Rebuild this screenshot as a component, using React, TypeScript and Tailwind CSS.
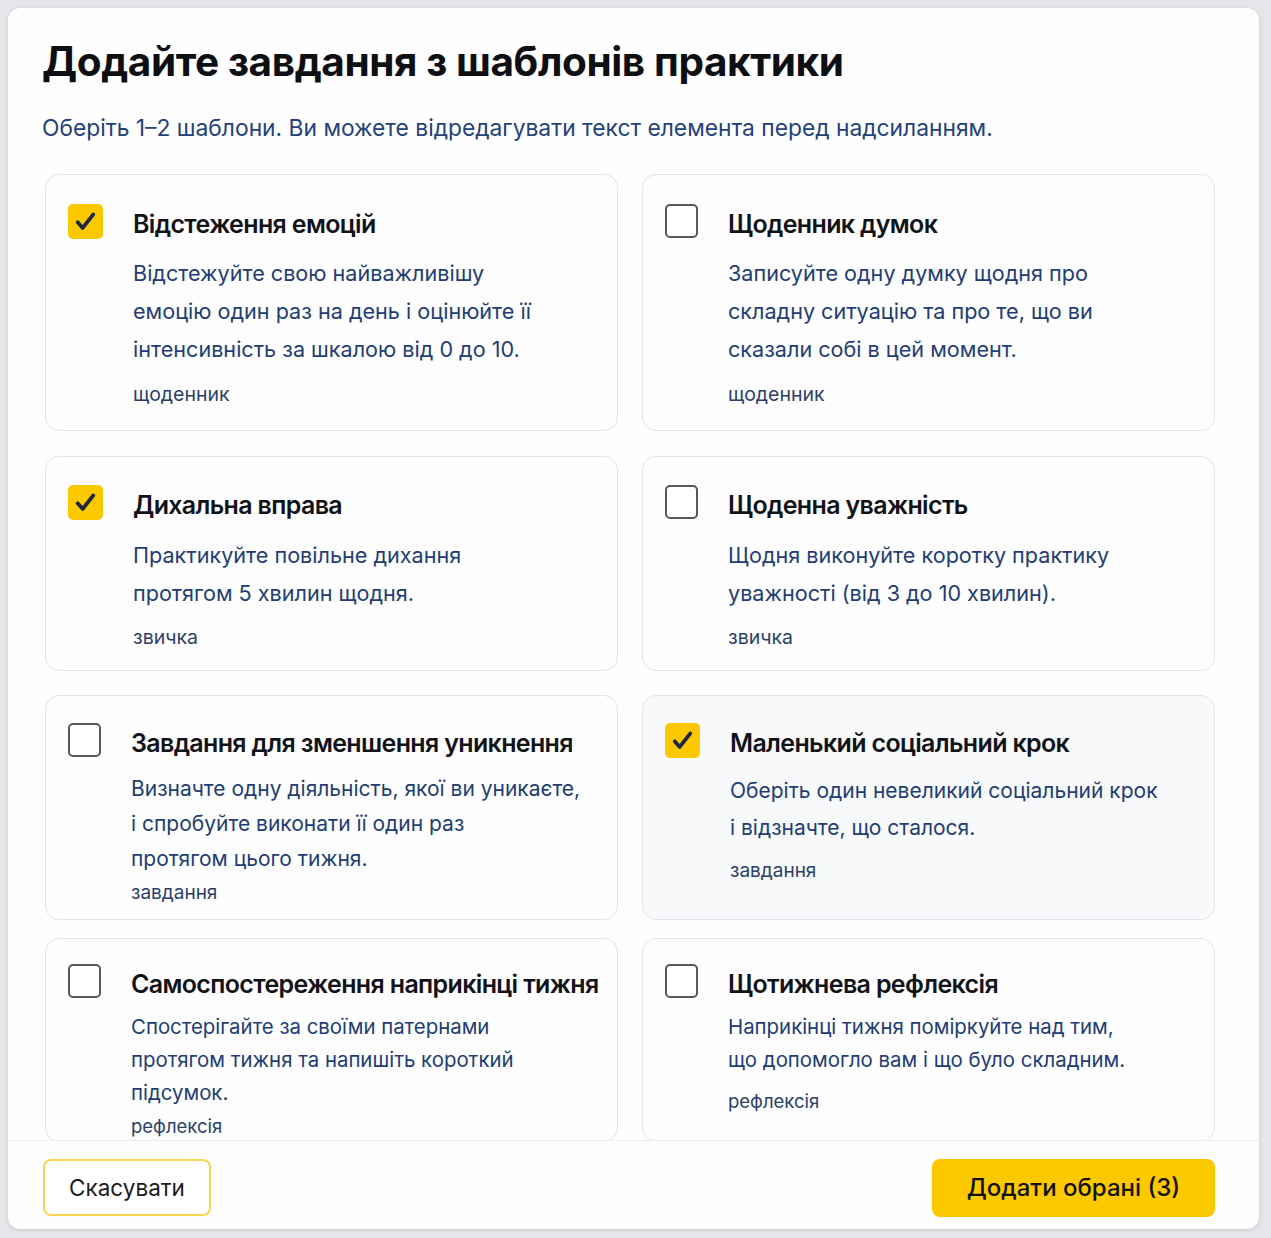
import React from "react";

type Card = {
  title: string;
  lines: string[];
  tag: string;
  checked: boolean;
  h: string;
  pt: string;
  descMt: string;
  lh: string;
  fs: string;
  tagFs: string;
  tagMt: string;
  bg: string;
};

const rows: Card[][] = [
  [
    {
      title: "Відстеження емоцій",
      lines: [
        "Відстежуйте свою найважливішу",
        "емоцію один раз на день і оцінюйте її",
        "інтенсивність за шкалою від 0 до 10.",
      ],
      tag: "щоденник",
      checked: true,
      h: "h-[257px]",
      pt: "pt-[31px]",
      descMt: "mt-[12px]",
      lh: "leading-[38px]",
      fs: "text-[21.6px]",
      tagFs: "text-[19.5px]",
      tagMt: "mt-[13px]",
      bg: "bg-[#fdfdfe]",
    },
    {
      title: "Щоденник думок",
      lines: [
        "Записуйте одну думку щодня про",
        "складну ситуацію та про те, що ви",
        "сказали собі в цей момент.",
      ],
      tag: "щоденник",
      checked: false,
      h: "h-[257px]",
      pt: "pt-[31px]",
      descMt: "mt-[12px]",
      lh: "leading-[38px]",
      fs: "text-[21.6px]",
      tagFs: "text-[19.5px]",
      tagMt: "mt-[13px]",
      bg: "bg-[#fdfdfe]",
    },
  ],
  [
    {
      title: "Дихальна вправа",
      lines: ["Практикуйте повільне дихання", "протягом 5 хвилин щодня."],
      tag: "звичка",
      checked: true,
      h: "h-[215px]",
      pt: "pt-[30px]",
      descMt: "mt-[13px]",
      lh: "leading-[38px]",
      fs: "text-[21.6px]",
      tagFs: "text-[19.5px]",
      tagMt: "mt-[12px]",
      bg: "bg-[#fdfdfe]",
    },
    {
      title: "Щоденна уважність",
      lines: [
        "Щодня виконуйте коротку практику",
        "уважності (від 3 до 10 хвилин).",
      ],
      tag: "звичка",
      checked: false,
      h: "h-[215px]",
      pt: "pt-[30px]",
      descMt: "mt-[13px]",
      lh: "leading-[38px]",
      fs: "text-[21.6px]",
      tagFs: "text-[19.5px]",
      tagMt: "mt-[12px]",
      bg: "bg-[#fdfdfe]",
    },
  ],
  [
    {
      title: "Завдання для зменшення уникнення",
      lines: [
        "Визначте одну діяльність, якої ви уникаєте,",
        "і спробуйте виконати її один раз",
        "протягом цього тижня.",
      ],
      tag: "завдання",
      checked: false,
      h: "h-[225px]",
      pt: "pt-[29px]",
      descMt: "mt-[10px]",
      lh: "leading-[35px]",
      fs: "text-[21px]",
      tagFs: "text-[19px]",
      tagMt: "mt-[4px]",
      bg: "bg-[#fdfdfe]",
    },
    {
      title: "Маленький соціальний крок",
      lines: ["Оберіть один невеликий соціальний крок", "і відзначте, що сталося."],
      tag: "завдання",
      checked: true,
      h: "h-[225px]",
      pt: "pt-[29px]",
      descMt: "mt-[11px]",
      lh: "leading-[37px]",
      fs: "text-[21px]",
      tagFs: "text-[19px]",
      tagMt: "mt-[12px]",
      bg: "bg-[#f8f9fb]",
    },
  ],
  [
    {
      title: "Самоспостереження наприкінці тижня",
      lines: [
        "Спостерігайте за своїми патернами",
        "протягом тижня та напишіть короткий",
        "підсумок.",
      ],
      tag: "рефлексія",
      checked: false,
      h: "h-[204px]",
      pt: "pt-[27px]",
      descMt: "mt-[8px]",
      lh: "leading-[33px]",
      fs: "text-[20.4px]",
      tagFs: "text-[18.5px]",
      tagMt: "mt-[4px]",
      bg: "bg-[#fdfdfe]",
    },
    {
      title: "Щотижнева рефлексія",
      lines: [
        "Наприкінці тижня поміркуйте над тим,",
        "що допомогло вам і що було складним.",
      ],
      tag: "рефлексія",
      checked: false,
      h: "h-[204px]",
      pt: "pt-[27px]",
      descMt: "mt-[8px]",
      lh: "leading-[33px]",
      fs: "text-[20.4px]",
      tagFs: "text-[18.5px]",
      tagMt: "mt-[12px]",
      bg: "bg-[#fdfdfe]",
    },
  ],
];

const rowMt = ["mt-[32px]", "mt-[25px]", "mt-[24px]", "mt-[18px]"];

function Checkbox({ checked }: { checked: boolean }) {
  if (checked) {
    return (
      <div className="mt-[-2px] flex h-[35px] w-[35px] shrink-0 items-center justify-center rounded-[5px] bg-[#fcc800]">
        <svg width="25" height="25" viewBox="0 0 24 24" fill="none">
          <path
            d="M4.5 12.8l4.8 5.4L19.5 5.2"
            stroke="#1d2840"
            strokeWidth="3.6"
            strokeLinecap="round"
            strokeLinejoin="round"
          />
        </svg>
      </div>
    );
  }
  return (
    <div className="mt-[-2px] h-[34px] w-[33px] shrink-0 rounded-[5px] border-2 border-[#54585f] bg-white" />
  );
}

function CardView({ c }: { c: Card }) {
  return (
    <div
      className={`${c.h} ${c.bg} flex rounded-[14px] border-[1.5px] border-[#e2e5ed] pl-[22px] pr-[20px] ${c.pt}`}
    >
      <Checkbox checked={c.checked} />
      <div className="ml-[30px] flex min-w-0 flex-col">
        <div className="whitespace-nowrap text-[25px] font-semibold leading-[36px] tracking-[-0.65px] text-[#111318]">
          {c.title}
        </div>
        <div
          className={`${c.descMt} ${c.lh} ${c.fs} whitespace-nowrap text-[#223d75]`}
        >
          {c.lines.map((l, i) => (
            <div key={i}>{l}</div>
          ))}
        </div>
        <div className={`${c.tagMt} ${c.tagFs} leading-[26px] text-[#2b3f6b]`}>
          {c.tag}
        </div>
      </div>
    </div>
  );
}

export default function App() {
  return (
    <div
      className="min-h-screen bg-[#e5e6e9] p-[8px]"
      style={{ fontFamily: "Inter, 'Noto Sans', sans-serif" }}
    >
      <div className="flex h-[1221px] w-[1251px] flex-col overflow-hidden rounded-[12px] bg-[#fefefe] shadow-[0_1px_4px_rgba(0,0,0,0.12)]">
        <div className="flex-1 overflow-hidden">
          <div className="pl-[34px] pt-[30px]">
            <h1 className="whitespace-nowrap text-[40.5px] font-bold leading-[48px] tracking-[-0.4px] text-[#0e0f12]">
              Додайте завдання з шаблонів практики
            </h1>
            <p className="mt-[28px] whitespace-nowrap text-[22.8px] leading-[28px] text-[#24417c]">
              Оберіть 1–2 шаблони. Ви можете відредагувати текст елемента перед надсиланням.
            </p>
          </div>
          <div className="pl-[37px] pr-[44px]">
            {rows.map((r, i) => (
              <div key={i} className={`${rowMt[i]} grid grid-cols-2 gap-x-[24px]`}>
                {r.map((c, j) => (
                  <CardView key={j} c={c} />
                ))}
              </div>
            ))}
          </div>
        </div>
        <div className="flex items-start justify-between border-t border-[#eceef2] pb-[12px] pl-[35px] pr-[44px] pt-[18px]">
          <button className="flex h-[57px] w-[168px] items-center justify-center rounded-[8px] border-2 border-[#f8d64e] bg-white text-[22.5px] text-[#1b1c20]">
            Скасувати
          </button>
          <button className="flex h-[58px] w-[283px] items-center justify-center rounded-[8px] bg-[#fcc800] text-[24px] font-medium text-[#121212]">
            Додати обрані (3)
          </button>
        </div>
      </div>
    </div>
  );
}
